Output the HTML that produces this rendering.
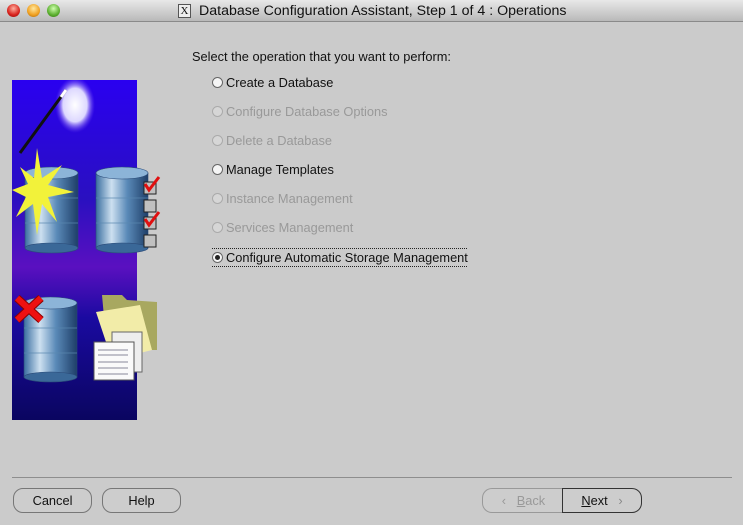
<!DOCTYPE html>
<html><head><meta charset="utf-8"><style>
*{margin:0;padding:0;box-sizing:border-box}
body{width:743px;height:525px;background:#cbcbcb;font-family:"Liberation Sans",sans-serif;font-size:12.8px;color:#111;position:relative;overflow:hidden}
#title{position:absolute;left:0;top:0;width:743px;height:22px;background:linear-gradient(#e8e8e8,#b9b9b9);border-bottom:1px solid #8a8a8a}
#title .t{position:absolute;left:199px;top:3px;font-family:"Liberation Sans",sans-serif;font-size:14.2px;color:#111;white-space:nowrap}
.dot{position:absolute;top:4px;width:13px;height:13px;border-radius:50%}
.xi{position:absolute;left:178px;top:4px;width:13px;height:14px;background:#eee;border:1px solid #555;font-size:11px;line-height:12px;text-align:center;font-family:"Liberation Serif",serif}
.lbl{position:absolute;left:192px;top:49px;white-space:nowrap}
.opt{position:absolute;left:212px;height:16px;line-height:16px;white-space:nowrap}
.opt i{display:inline-block;width:11px;height:11px;border-radius:50%;border:1px solid #666;background:#f5f5f5;vertical-align:-1px;margin-right:3px;position:relative}
.dis{color:#999}
.dis i{border-color:#aaa;background:#d6d6d6}
.sel i::after{content:"";position:absolute;left:2px;top:2px;width:5px;height:5px;border-radius:50%;background:#222}
.sel{border-top:1px dotted #222;border-bottom:1px dotted #222;height:19px;line-height:17px;width:255px}
#sep{position:absolute;left:12px;top:477px;width:720px;height:1px;background:#8e8e8e}
.btn{position:absolute;top:488px;height:25px;border:1px solid #777;border-radius:10px;text-align:center;line-height:23px;background:#cdcdcd;white-space:nowrap}
</style></head><body>
<div id="title">
<div class="dot" style="left:7px;background:radial-gradient(circle at 50% 35%,#ffb0a0,#d8221c 60%,#8a1010)"></div>
<div class="dot" style="left:27px;background:radial-gradient(circle at 50% 35%,#ffe8a0,#f0a020 60%,#a06010)"></div>
<div class="dot" style="left:47px;background:radial-gradient(circle at 50% 35%,#d0ffb0,#5cb030 60%,#307010)"></div>
<div class="xi">X</div>
<div class="t">Database Configuration Assistant, Step 1 of 4 : Operations</div>
</div>

<svg style="position:absolute;left:12px;top:80px" width="150" height="340" viewBox="0 0 150 340">
<defs>
<linearGradient id="bg" x1="0" y1="0" x2="0" y2="1">
<stop offset="0" stop-color="#2a00f0"/><stop offset=".35" stop-color="#2a10c0"/><stop offset=".55" stop-color="#5a10c0"/><stop offset=".7" stop-color="#1a0aa0"/><stop offset="1" stop-color="#0a0560"/></linearGradient>
<linearGradient id="cyl" x1="0" x2="1"><stop offset="0" stop-color="#3a6ea0"/><stop offset=".3" stop-color="#cde0f0"/><stop offset=".6" stop-color="#5a8ab8"/><stop offset="1" stop-color="#1e3e68"/></linearGradient>
<radialGradient id="glow"><stop offset="0" stop-color="#fff"/><stop offset=".6" stop-color="#ddd8ff"/><stop offset="1" stop-color="#6a40f0" stop-opacity="0"/></radialGradient>
</defs>
<rect width="125" height="340" fill="url(#bg)"/>
<ellipse cx="63" cy="25" rx="20" ry="28" fill="url(#glow)"/>
<line x1="8" y1="73" x2="54" y2="10" stroke="#111" stroke-width="3"/>
<line x1="49" y1="17" x2="54" y2="10" stroke="#fff" stroke-width="3"/>
<g stroke="#2a4a78" stroke-width="0.6">
<rect x="13" y="93" width="53" height="75" fill="url(#cyl)"/><ellipse cx="39.5" cy="168" rx="26.5" ry="5" fill="#3a6898"/><ellipse cx="39.5" cy="93" rx="26.5" ry="6" fill="#8cb4d8"/>
<rect x="84" y="93" width="52" height="75" fill="url(#cyl)"/><ellipse cx="110" cy="168" rx="26" ry="5" fill="#3a6898"/><ellipse cx="110" cy="93" rx="26" ry="6" fill="#8cb4d8"/>
<rect x="12" y="223" width="53" height="74" fill="url(#cyl)"/><ellipse cx="38.5" cy="297" rx="26.5" ry="5" fill="#3a6898"/><ellipse cx="38.5" cy="223" rx="26.5" ry="6" fill="#8cb4d8"/>
</g>
<g stroke="#5a88b0" stroke-width="1" opacity=".7"><path d="M13,118 h53 M13,143 h53 M84,118 h52 M84,143 h52 M12,248 h53 M12,273 h53"/></g>
<polygon points="25,68 30,98 50,85 36,105 62,112 36,117 45,142 30,124 25,155 21,124 4,137 14,117 0,110 16,104 8,87 22,98" fill="#f2f23a"/>
<g fill="#c0c0c0" stroke="#222"><rect x="132" y="102" width="12" height="12"/><rect x="132" y="120" width="12" height="12"/><rect x="132" y="137" width="12" height="12"/><rect x="132" y="155" width="12" height="12"/></g>
<path d="M133,104 l4,6 l10,-13" stroke="#e01010" stroke-width="3" fill="none"/>
<path d="M133,139 l4,6 l10,-13" stroke="#e01010" stroke-width="3" fill="none"/>
<path d="M5,218 l24,22 M29,218 l-24,22" stroke="#8a0000" stroke-width="8"/>
<path d="M5,218 l24,22 M29,218 l-24,22" stroke="#ee1111" stroke-width="6"/>
<polygon points="90,215 110,215 115,220 145,222 145,270 95,270" fill="#a8a860"/>
<polygon points="84,232 128,225 140,270 100,280" fill="#f2eca8"/>
<rect x="100" y="252" width="30" height="40" fill="#eee" stroke="#666"/>
<rect x="82" y="262" width="40" height="38" fill="#fafafa" stroke="#555"/>
<g stroke="#889"><line x1="86" y1="270" x2="116" y2="270"/><line x1="86" y1="275" x2="116" y2="275"/><line x1="86" y1="282" x2="116" y2="282"/><line x1="86" y1="288" x2="116" y2="288"/><line x1="86" y1="294" x2="116" y2="294"/></g>
</svg>

<div class="lbl">Select the operation that you want to perform:</div>
<div class="opt" style="top:75px"><i></i>Create a Database</div>
<div class="opt dis" style="top:104px"><i></i>Configure Database Options</div>
<div class="opt dis" style="top:133px"><i></i>Delete a Database</div>
<div class="opt" style="top:162px"><i></i>Manage Templates</div>
<div class="opt dis" style="top:191px"><i></i>Instance Management</div>
<div class="opt dis" style="top:220px"><i></i>Services Management</div>
<div class="opt sel" style="top:248px"><i></i>Configure Automatic Storage Management</div>

<div id="sep"></div>
<div class="btn" style="left:13px;width:79px">Cancel</div>
<div class="btn" style="left:102px;width:79px">Help</div>
<div class="btn" style="left:482px;width:82px;color:#999;border-color:#999;border-radius:10px 0 0 10px;border-right:none">&lsaquo;&nbsp;&nbsp; <u>B</u>ack</div>
<div class="btn" style="left:562px;width:80px;border-color:#333;border-radius:0 10px 10px 0"><u>N</u>ext &nbsp;&nbsp;<span style="color:#888">&rsaquo;</span></div>
</body></html>
